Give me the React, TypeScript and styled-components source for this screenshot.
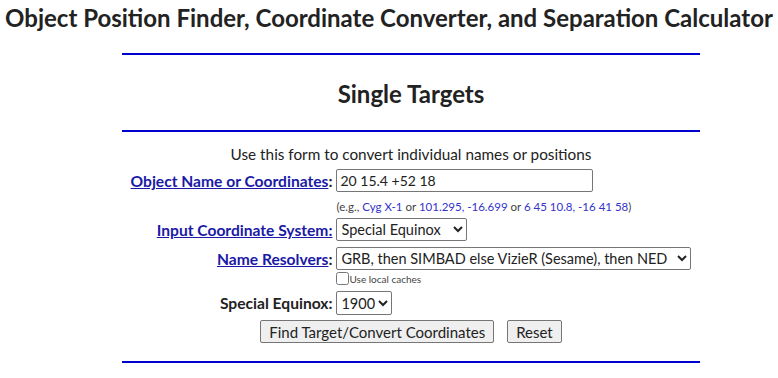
import { createGlobalStyle, styled } from 'styled-components'

const GlobalStyle = createGlobalStyle`
  body {
    margin: 0;
    background: #fff;
    color: #222;
    font-family: Lato, "Noto Sans", sans-serif;
  }
`

export default function App() {
  return (
    <>
      <GlobalStyle />
      <Title>Object Position Finder, Coordinate Converter, and Separation Calculator</Title>

      <Content>
        <Rule $top={23} />
        <Heading>Single Targets</Heading>
        <Rule $top={0} />

        <Intro>Use this form to convert individual names or positions</Intro>

        <Form>
          <Label>
            <LabelLink href="#">Object Name or Coordinates</LabelLink>:
          </Label>
          <Field>
            <TextInput defaultValue="20 15.4 +52 18" />
          </Field>

          <span />
          <Hint>
            (e.g., <HintLink href="#">Cyg X-1</HintLink> or{' '}
            <HintLink href="#">101.295, -16.699</HintLink> or{' '}
            <HintLink href="#">6 45 10.8, -16 41 58</HintLink>)
          </Hint>

          <Label $top={3}>
            <LabelLink href="#">Input Coordinate System:</LabelLink>
          </Label>
          <Field $top={3}>
            <Select $width={131} defaultValue="special">
              <option value="special">Special Equinox</option>
            </Select>
          </Field>

          <Label $top={6}>
            <LabelLink href="#">Name Resolvers</LabelLink>:
          </Label>
          <Field $top={6}>
            <Select $width={355} defaultValue="grb">
              <option value="grb">GRB, then SIMBAD else VizieR (Sesame), then NED</option>
            </Select>
          </Field>

          <span />
          <CacheRow>
            <input type="checkbox" />
            Use local caches
          </CacheRow>

          <Label $top={6}>Special Equinox:</Label>
          <Field $top={6}>
            <Select $width={56} $height={24} defaultValue="1900">
              <option value="1900">1900</option>
            </Select>
          </Field>

          <Buttons>
            <Button type="button">Find Target/Convert Coordinates</Button>
            <Button type="button">Reset</Button>
          </Buttons>
        </Form>

        <Rule $top={18} />
      </Content>
    </>
  )
}

const Title = styled.h1`
  margin: 6px 0 0;
  font-size: 24px;
  line-height: 24px;
  font-weight: bold;
  text-align: center;
  color: #222;
`

const Content = styled.div`
  margin-left: 122px;
  width: 578px;
  display: flex;
  flex-direction: column;
`

const Rule = styled.div<{ $top: number }>`
  height: 2px;
  margin-top: ${(p) => p.$top}px;
  background: #0000cc;
`

const Heading = styled.h2`
  margin: 27px 0 24px;
  font-size: 24px;
  line-height: 24px;
  font-weight: bold;
  text-align: center;
  color: #222;
`

const Intro = styled.p`
  margin: 12px 0 0;
  font-size: 15.3px;
  line-height: 20px;
  text-align: center;
`

const Form = styled.div`
  display: grid;
  grid-template-columns: auto auto;
  justify-content: center;
  align-items: center;
  column-gap: 4px;
  margin-top: 5px;
`

const Label = styled.div<{ $top?: number }>`
  margin-top: ${(p) => p.$top ?? 0}px;
  text-align: right;
  font-size: 15.6px;
  font-weight: bold;
  color: #222;
`

const LabelLink = styled.a`
  color: #1a1aa6;
  text-decoration: underline;
`

const Field = styled.div<{ $top?: number }>`
  margin-top: ${(p) => p.$top ?? 0}px;
  display: flex;
`

const TextInput = styled.input`
  box-sizing: border-box;
  width: 257px;
  height: 23px;
  padding: 1px 3px;
  border: 1px solid #767676;
  border-radius: 2px;
  font-family: inherit;
  font-size: 14px;
  color: #222;
`

const Hint = styled.div`
  margin-top: 7px;
  font-size: 11.5px;
  line-height: 16px;
  color: #444;
`

const HintLink = styled.a`
  color: #3333cc;
  text-decoration: none;
`

const Select = styled.select<{ $width: number; $height?: number }>`
  box-sizing: border-box;
  width: ${(p) => p.$width}px;
  height: ${(p) => p.$height ?? 23}px;
  border: 1px solid #767676;
  border-radius: 2px;
  background: #fff;
  font-family: inherit;
  font-size: 14.5px;
  color: #222;
`

const CacheRow = styled.label`
  display: flex;
  align-items: flex-end;
  height: 14px;
  margin-top: 1px;
  font-size: 10px;
  color: #444;

  input {
    margin: 0;
    width: 13px;
    height: 13px;
  }
`

const Buttons = styled.div`
  grid-column: 1 / span 2;
  margin-top: 5px;
  display: flex;
  justify-content: center;
  gap: 13px;
`

const Button = styled.button`
  box-sizing: border-box;
  height: 23px;
  padding: 0 8px;
  border: 1px solid #767676;
  border-radius: 2px;
  background: #efefef;
  font-family: inherit;
  font-size: 15px;
  color: #222;
`
